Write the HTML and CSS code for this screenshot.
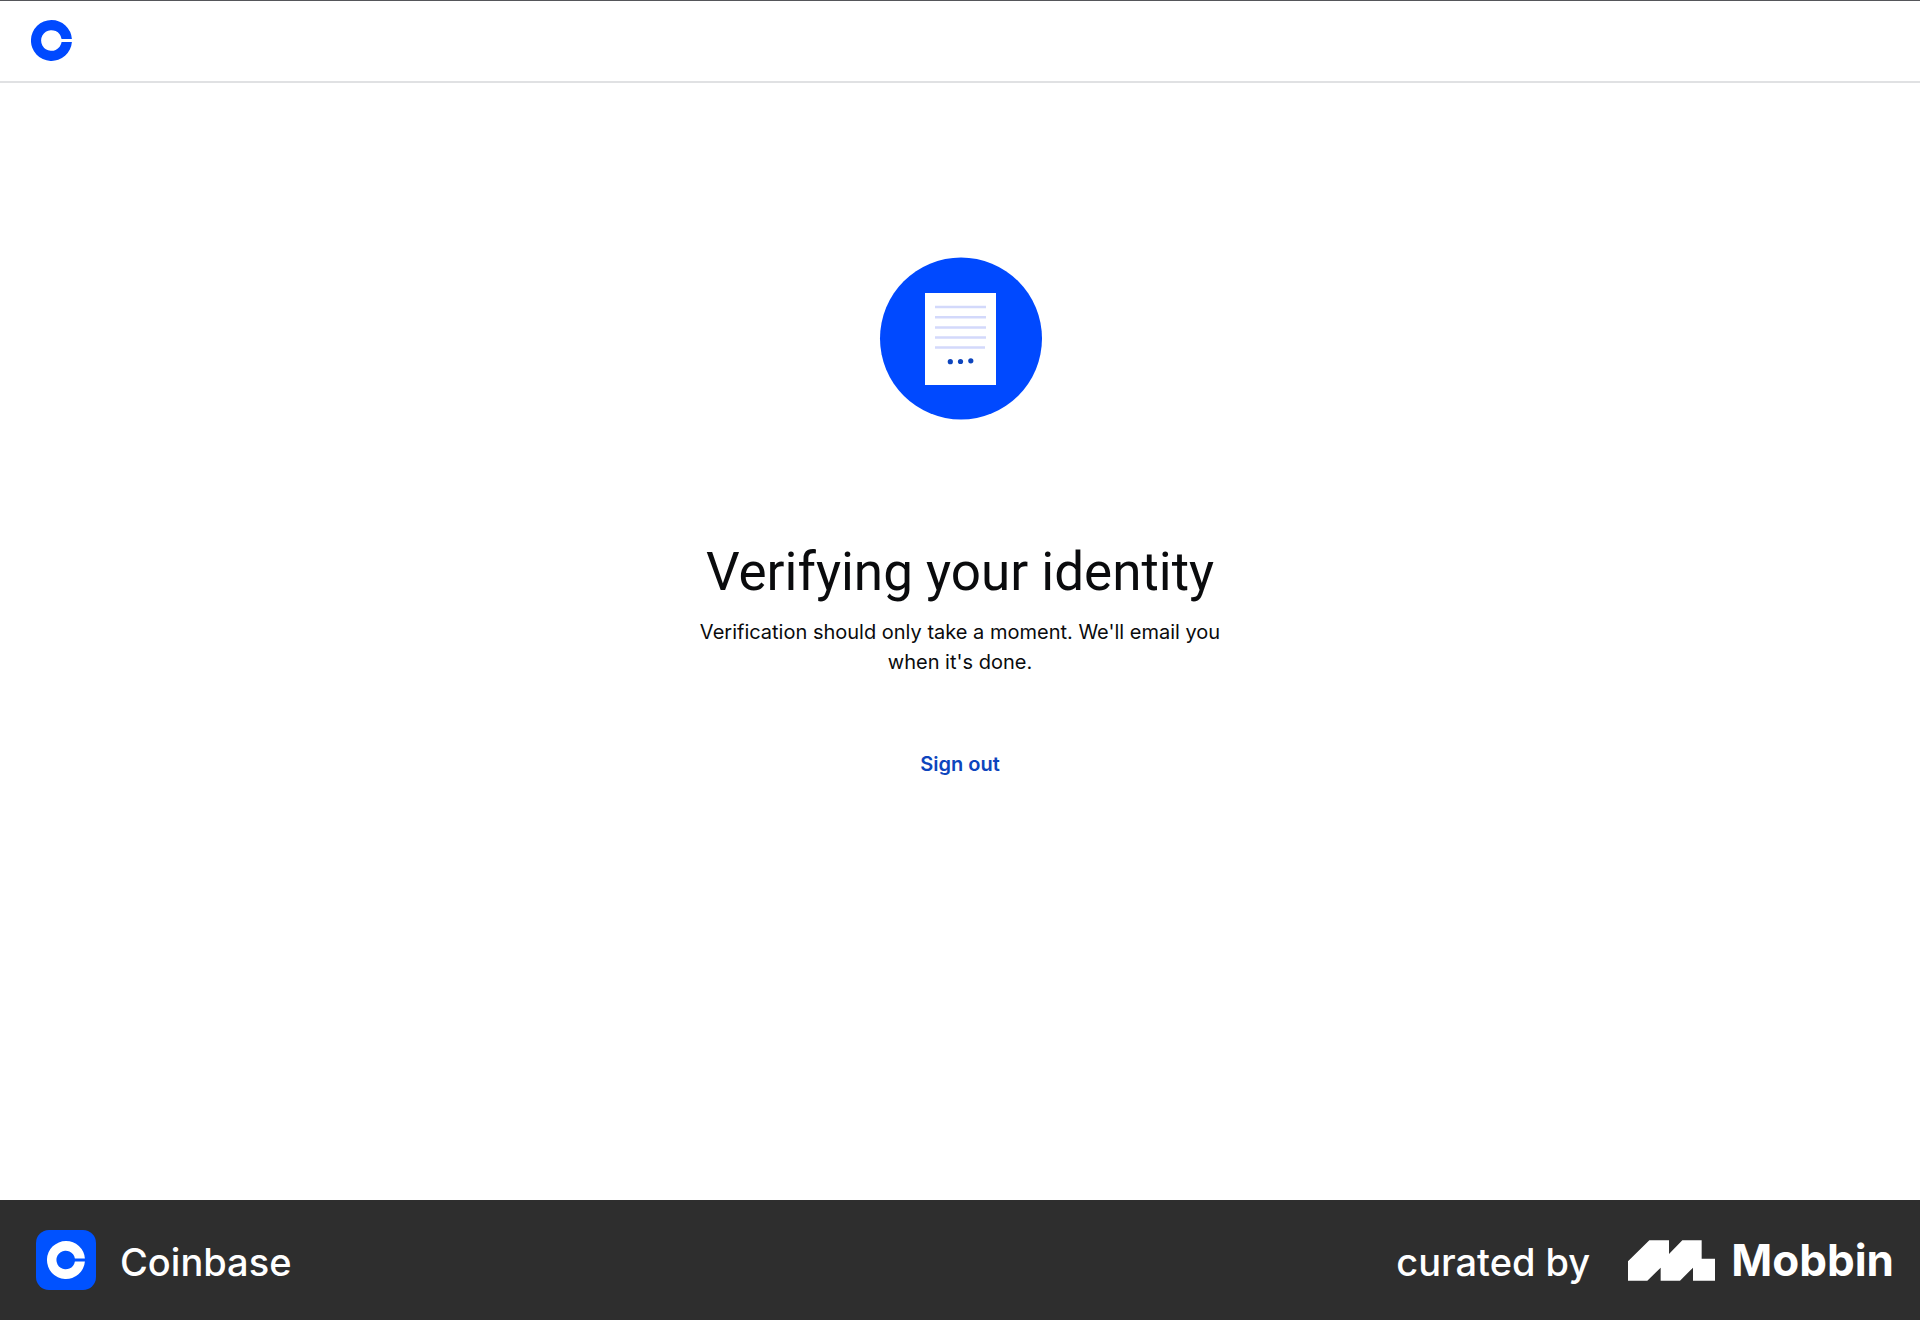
FILE: index.html
```html
<!DOCTYPE html>
<html lang="en">
<head>
<meta charset="utf-8">
<meta name="viewport" content="width=device-width, initial-scale=1">
<title>Verifying your identity</title>
<link rel="stylesheet" href="styles.css">
</head>
<body>
<header class="header">
  <a class="header-logo" href="#" aria-label="Coinbase home">
    <svg viewBox="0 0 41 41" width="41" height="41" aria-hidden="true">
      <path fill="#0049ff" fill-rule="evenodd" d="M20.500 0A20.500 20.500 0 0 1 40.900 19H30.600A10.300 10.300 0 1 0 30.600 22H40.900A20.500 20.500 0 1 1 20.500 0Z"/>
    </svg>
  </a>
</header>
<main class="main">
  <svg class="illustration" viewBox="0 0 164 164" aria-hidden="true">
    <circle cx="83" cy="81.500" r="81" fill="#0049ff"/>
    <path fill="#fff" d="M47 36h71v92H47z"/>
    <path stroke="#d3d9fb" stroke-width="2.500" d="M57 50h51M57 60.200h51M57 70.400h51M57 80.600h51M57 90.600h50"/>
    <g fill="#0d45bd">
      <circle cx="72.300" cy="104.700" r="2.600"/>
      <circle cx="82.500" cy="104.500" r="2.600"/>
      <circle cx="92.800" cy="103.800" r="2.600"/>
    </g>
  </svg>
  <h1 class="title">Verifying your identity</h1>
  <p class="message">Verification should only take a moment. We'll email you when it's done.</p>
  <button class="sign-out" type="button">Sign out</button>
</main>
<footer class="footer">
  <div class="app">
    <svg viewBox="0 0 60 60" width="60" height="60" aria-hidden="true">
      <rect width="60" height="60" rx="13" fill="#0052ff"/>
      <path fill="#fff" d="M30 11A19 19 0 0 1 48.900 28.500H38.900A9.300 9.300 0 1 0 38.900 31.500H48.900A19 19 0 1 1 30 11Z"/>
    </svg>
    <span class="label">Coinbase</span>
  </div>
  <div class="credit">
    <span class="label">curated by</span>
    <a class="mobbin" href="#">
      <svg viewBox="51 44 261 121" width="87" height="41" aria-hidden="true">
        <path fill="#fff" d="M51 165V107L115 44H174V85L214 44H272V99H312V165H246V126L207 165H149V126L109 165Z"/>
      </svg>
      <span>Mobbin</span>
    </a>
  </div>
</footer>
</body>
</html>
```
FILE: styles.css
```css
*, *::before, *::after {
  box-sizing: border-box;
}

body {
  margin: 0;
  min-height: 100vh;
  display: flex;
  flex-direction: column;
  background: #fff;
  color: #0a0b0d;
  font-family: Inter, "Liberation Sans", Arial, sans-serif;
}

.header {
  display: flex;
  align-items: center;
  height: 83px;
  padding: 0 31px 2px;
  border-top: 1px solid #55565a;
  border-bottom: 2px solid #e0e1e3;
}

.header-logo {
  display: flex;
}

.main {
  flex: 1;
  display: flex;
  flex-direction: column;
  align-items: center;
  padding: 174px 24px 64px;
  text-align: center;
}

.illustration {
  width: 164px;
  height: 164px;
}

.title {
  margin: 120px 0 0;
  font-family: Roboto, "Liberation Sans", Arial, sans-serif;
  font-size: 53px;
  font-weight: 400;
  line-height: 62px;
}

.message {
  max-width: 560px;
  margin: 14px 0 0;
  font-size: 20px;
  line-height: 30px;
}

.sign-out {
  margin: 64px 0 0;
  padding: 8px 16px;
  border: 0;
  background: none;
  color: #0d45bd;
  font: inherit;
  font-size: 20px;
  font-weight: 600;
  line-height: 30px;
  cursor: pointer;
}

.footer {
  display: flex;
  justify-content: space-between;
  align-items: center;
  height: 120px;
  padding: 0 26px 0 36px;
  background: #2e2e2e;
  color: #fff;
}

.app {
  display: flex;
  align-items: center;
  gap: 24px;
}

.label {
  padding-top: 4px;
  font-size: 38px;
  font-weight: 500;
  line-height: 48px;
}

.credit {
  display: flex;
  align-items: center;
  gap: 38px;
}

.mobbin {
  display: flex;
  align-items: center;
  gap: 16px;
  color: #fff;
  font-size: 44px;
  font-weight: 700;
  line-height: 48px;
  text-decoration: none;
}
```
